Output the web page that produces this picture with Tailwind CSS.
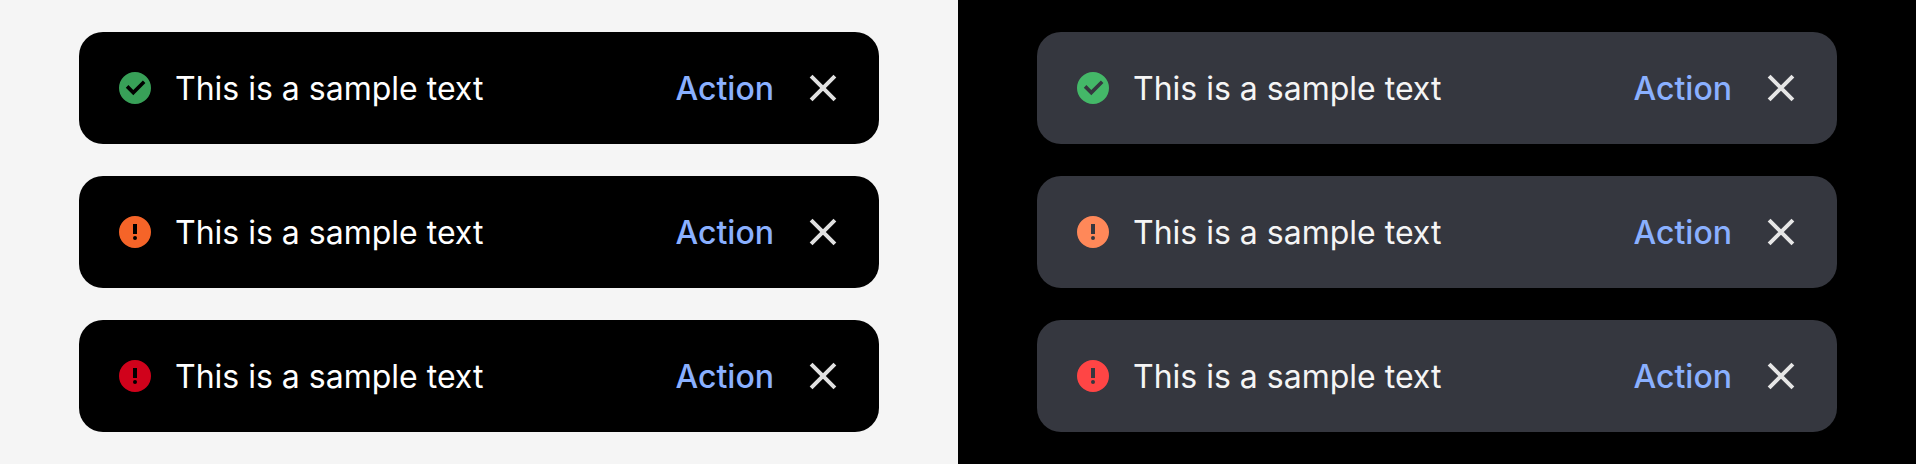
<!DOCTYPE html>
<html lang="en">
<head>
<meta charset="utf-8">
<title>Snackbars</title>
<script src="https://cdn.jsdelivr.net/npm/@tailwindcss/browser@4"></script>
</head>
<body class="font-['Inter',sans-serif] w-[1916px] h-[464px] overflow-hidden antialiased">
<svg class="hidden">
  <symbol id="ok" viewBox="0 0 32 32"><path fill="currentColor" fill-rule="evenodd" d="M16 0a16 16 0 1 0 0 32a16 16 0 0 0 0-32ZM14.3 23.2L6.8 15.7L9.4 13.1L14.3 18L23.9 8.4L26.4 10.9Z"/></symbol>
  <symbol id="alert" viewBox="0 0 32 32"><path fill="currentColor" fill-rule="evenodd" d="M16 0a16 16 0 1 0 0 32a16 16 0 0 0 0-32ZM14 8H18V18H14ZM16 20a2 2 0 1 1 0 4a2 2 0 0 1 0-4Z"/></symbol>
  <symbol id="close" viewBox="0 0 40 40"><path fill="none" stroke="currentColor" stroke-width="4" d="M8.1 8.1L31.9 31.9M31.9 8.1L8.1 31.9"/></symbol>
</svg>
<main class="flex h-full">
  <section class="w-[958px] bg-[#f5f5f5] px-[79px] py-8 flex flex-col gap-8">
    <div class="h-28 rounded-3xl bg-black pl-10 pr-9 flex items-center text-[32px] leading-10 text-white">
      <svg class="size-8 text-[#38a058]"><use href="#ok"/></svg>
      <p class="ml-6 flex-1 pt-0.5">This is a sample text</p>
      <button class="pt-0.5 font-medium text-[#8ab0ff]">Action</button>
      <svg class="ml-[29px] size-10 text-[#e0e0e0]"><use href="#close"/></svg>
    </div>
    <div class="h-28 rounded-3xl bg-black pl-10 pr-9 flex items-center text-[32px] leading-10 text-white">
      <svg class="size-8 text-[#f56428]"><use href="#alert"/></svg>
      <p class="ml-6 flex-1 pt-0.5">This is a sample text</p>
      <button class="pt-0.5 font-medium text-[#8ab0ff]">Action</button>
      <svg class="ml-[29px] size-10 text-[#e0e0e0]"><use href="#close"/></svg>
    </div>
    <div class="h-28 rounded-3xl bg-black pl-10 pr-9 flex items-center text-[32px] leading-10 text-white">
      <svg class="size-8 text-[#d0021b]"><use href="#alert"/></svg>
      <p class="ml-6 flex-1 pt-0.5">This is a sample text</p>
      <button class="pt-0.5 font-medium text-[#8ab0ff]">Action</button>
      <svg class="ml-[29px] size-10 text-[#e0e0e0]"><use href="#close"/></svg>
    </div>
  </section>
  <section class="w-[958px] bg-black px-[79px] py-8 flex flex-col gap-8">
    <div class="h-28 rounded-3xl bg-[#35373f] pl-10 pr-9 flex items-center text-[32px] leading-10 text-[#f5f5f5]">
      <svg class="size-8 text-[#44b868]"><use href="#ok"/></svg>
      <p class="ml-6 flex-1 pt-0.5">This is a sample text</p>
      <button class="pt-0.5 font-medium text-[#8ab0ff]">Action</button>
      <svg class="ml-[29px] size-10 text-[#e6e6e6]"><use href="#close"/></svg>
    </div>
    <div class="h-28 rounded-3xl bg-[#35373f] pl-10 pr-9 flex items-center text-[32px] leading-10 text-[#f5f5f5]">
      <svg class="size-8 text-[#ff8859]"><use href="#alert"/></svg>
      <p class="ml-6 flex-1 pt-0.5">This is a sample text</p>
      <button class="pt-0.5 font-medium text-[#8ab0ff]">Action</button>
      <svg class="ml-[29px] size-10 text-[#e6e6e6]"><use href="#close"/></svg>
    </div>
    <div class="h-28 rounded-3xl bg-[#35373f] pl-10 pr-9 flex items-center text-[32px] leading-10 text-[#f5f5f5]">
      <svg class="size-8 text-[#ff4545]"><use href="#alert"/></svg>
      <p class="ml-6 flex-1 pt-0.5">This is a sample text</p>
      <button class="pt-0.5 font-medium text-[#8ab0ff]">Action</button>
      <svg class="ml-[29px] size-10 text-[#e6e6e6]"><use href="#close"/></svg>
    </div>
  </section>
</main>
</body>
</html>
